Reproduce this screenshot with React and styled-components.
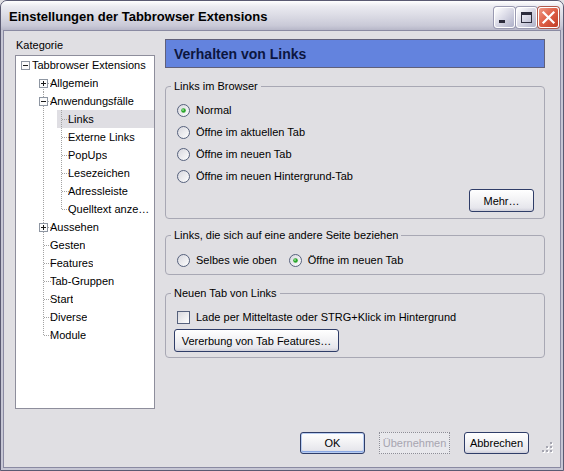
import React from 'react';
import styled, { createGlobalStyle } from 'styled-components';

const GlobalStyle = createGlobalStyle`
  html, body {
    margin: 0;
    padding: 0;
    background: #e0dfe3;
  }
  body {
    font-family: "Liberation Sans", Arial, sans-serif;
    font-size: 11px;
    color: #000;
  }
  * {
    box-sizing: border-box;
  }
`;

const tree = [
  { label: 'Tabbrowser Extensions', guides: [{ exp: '-' }] },
  { label: 'Allgemein', guides: [null, { kind: 'first', exp: '+' }] },
  { label: 'Anwendungsfälle', guides: [null, { kind: 'mid', exp: '-' }] },
  { label: 'Links', selected: true, guides: [null, { kind: 'pass' }, { kind: 'mid' }] },
  { label: 'Externe Links', guides: [null, { kind: 'pass' }, { kind: 'mid' }] },
  { label: 'PopUps', guides: [null, { kind: 'pass' }, { kind: 'mid' }] },
  { label: 'Lesezeichen', guides: [null, { kind: 'pass' }, { kind: 'mid' }] },
  { label: 'Adressleiste', guides: [null, { kind: 'pass' }, { kind: 'mid' }] },
  { label: 'Quelltext anze…', guides: [null, { kind: 'pass' }, { kind: 'last' }] },
  { label: 'Aussehen', guides: [null, { kind: 'mid', exp: '+' }] },
  { label: 'Gesten', guides: [null, { kind: 'mid' }] },
  { label: 'Features', guides: [null, { kind: 'mid' }] },
  { label: 'Tab-Gruppen', guides: [null, { kind: 'mid' }] },
  { label: 'Start', guides: [null, { kind: 'mid' }] },
  { label: 'Diverse', guides: [null, { kind: 'mid' }] },
  { label: 'Module', guides: [null, { kind: 'last' }] },
];

const browserOptions = [
  { label: 'Normal', checked: true },
  { label: 'Öffne im aktuellen Tab' },
  { label: 'Öffne im neuen Tab' },
  { label: 'Öffne im neuen Hintergrund-Tab' },
];

// tree guide lines + expander box
const Guide = ({ kind, exp }) => {
  const dot = { stroke: '#a3a3a3', strokeDasharray: '1 1' };
  return (
    <svg width="18" height="18" viewBox="0 0 18 18" shapeRendering="crispEdges">
      {(kind === 'pass' || kind === 'mid') && <line x1="9.5" y1="0" x2="9.5" y2="18" {...dot} />}
      {kind === 'last' && <line x1="9.5" y1="0" x2="9.5" y2="10" {...dot} />}
      {kind === 'first' && <line x1="9.5" y1="9" x2="9.5" y2="18" {...dot} />}
      {kind && kind !== 'pass' && <line x1="10" y1="9.5" x2="18" y2="9.5" {...dot} />}
      {exp && (
        <g>
          <rect x="5.5" y="5.5" width="8" height="8" fill="#fbfbfb" stroke="#8e96a2" />
          <line x1="7" y1="9.5" x2="12" y2="9.5" stroke="#1a1a1a" />
          {exp === '+' && <line x1="9.5" y1="7" x2="9.5" y2="12" stroke="#1a1a1a" />}
        </g>
      )}
    </svg>
  );
};

const RadioIcon = ({ checked }) => (
  <svg width="13" height="13" viewBox="0 0 13 13">
    <defs>
      <linearGradient id="radioFill" x1="0" y1="0" x2="1" y2="1">
        <stop offset="0" stopColor="#d6d6dd" />
        <stop offset="1" stopColor="#ffffff" />
      </linearGradient>
    </defs>
    <circle cx="6.5" cy="6.5" r="6" fill="url(#radioFill)" stroke="#56617c" />
    {checked && <circle cx="6.5" cy="6.5" r="2.3" fill="#2aa52a" />}
    {checked && <circle cx="6" cy="6" r="0.9" fill="#8ee08e" />}
  </svg>
);

const MinimizeIcon = () => (
  <svg width="21" height="21" viewBox="0 0 21 21" shapeRendering="crispEdges">
    <rect x="5" y="13" width="6" height="3" fill="#2c2c3c" />
  </svg>
);

const MaximizeIcon = () => (
  <svg width="21" height="21" viewBox="0 0 21 21" shapeRendering="crispEdges">
    <rect x="5.5" y="5.5" width="10" height="10" fill="none" stroke="#2c2c3c" />
    <rect x="5" y="5" width="11" height="3" fill="#2c2c3c" />
  </svg>
);

const CloseIcon = () => (
  <svg width="21" height="21" viewBox="0 0 21 21">
    <path d="M5.5 5.5 L15.5 15.5 M15.5 5.5 L5.5 15.5" stroke="#fff" strokeWidth="2.2" strokeLinecap="square" />
  </svg>
);

const GripIcon = () => (
  <svg width="12" height="12" viewBox="0 0 12 12" shapeRendering="crispEdges">
    {[[8, 0], [4, 4], [8, 4], [0, 8], [4, 8], [8, 8]].map(([x, y]) => (
      <g key={`${x}-${y}`}>
        <rect x={x + 1} y={y + 1} width="2" height="2" fill="#ffffff" />
        <rect x={x} y={y} width="2" height="2" fill="#a5a5b0" />
      </g>
    ))}
  </svg>
);

const App = () => (
  <>
    <GlobalStyle />
    <Window>
      <TitleBar>
        <Title>Einstellungen der Tabbrowser Extensions</Title>
        <CaptionButtons>
          <CaptionButton><MinimizeIcon /></CaptionButton>
          <CaptionButton><MaximizeIcon /></CaptionButton>
          <CaptionButton $close><CloseIcon /></CaptionButton>
        </CaptionButtons>
      </TitleBar>

      <Client>
        <Body>
          <Sidebar>
            <SideLabel>Kategorie</SideLabel>
            <Tree>
              {tree.map(item => (
                <TreeRow key={item.label} $selected={item.selected}>
                  {item.guides.map((g, i) => (
                    <Guide key={i} kind={g && g.kind} exp={g && g.exp} />
                  ))}
                  <TreeLabel>{item.label}</TreeLabel>
                </TreeRow>
              ))}
            </Tree>
          </Sidebar>

          <Main>
            <Header>Verhalten von Links</Header>

            <Group $top={12} $pad="6px 11px 6px">
              <Legend>Links im Browser</Legend>
              {browserOptions.map(opt => (
                <Option key={opt.label} $h={22}>
                  <RadioIcon checked={opt.checked} />
                  <span>{opt.label}</span>
                </Option>
              ))}
              <ButtonRow>
                <PushButton $w={65}>Mehr…</PushButton>
              </ButtonRow>
            </Group>

            <Group $top={10} $pad="9px 11px 5px">
              <Legend>Links, die sich auf eine andere Seite beziehen</Legend>
              <InlineOptions>
                <Option $h={18}>
                  <RadioIcon />
                  <span>Selbes wie oben</span>
                </Option>
                <Option $h={18}>
                  <RadioIcon checked />
                  <span>Öffne im neuen Tab</span>
                </Option>
              </InlineOptions>
            </Group>

            <Group $top={12} $pad="8px 11px 5px">
              <Legend>Neuen Tab von Links</Legend>
              <Option $h={18}>
                <CheckBox />
                <span>Lade per Mitteltaste oder STRG+Klick im Hintergrund</span>
              </Option>
              <FeatureButton $w={165}>Vererbung von Tab Features…</FeatureButton>
            </Group>
          </Main>
        </Body>

        <Footer>
          <PushButton $w={65} $default>OK</PushButton>
          <PushButton $w={71} disabled>Übernehmen</PushButton>
          <PushButton $w={65}>Abbrechen</PushButton>
        </Footer>
        <Grip><GripIcon /></Grip>
      </Client>
    </Window>
  </>
);

export default App;

const Window = styled.div`
  width: 564px;
  height: 471px;
  display: flex;
  flex-direction: column;
  border: 1px solid #5a5a72;
  border-radius: 7px 7px 0 0;
  background: #c6c6d4;
  overflow: hidden;
`;

const TitleBar = styled.div`
  height: 29px;
  flex-shrink: 0;
  display: flex;
  align-items: center;
  justify-content: space-between;
  padding: 0 4px 0 8px;
  background: linear-gradient(#ffffff 0%, #ebebf1 18%, #d9d9e3 55%, #c9c9d7 85%, #b7b7c8 100%);
`;

const Title = styled.div`
  font-family: "Liberation Sans", Arial, sans-serif;
  font-weight: bold;
  font-size: 13px;
  color: #000;
  padding-top: 1px;
`;

const CaptionButtons = styled.div`
  display: flex;
  gap: 1px;
  padding-top: 3px;
`;

const CaptionButton = styled.div`
  width: 21px;
  height: 21px;
  border: 1px solid #fff;
  border-radius: 3px;
  display: flex;
  align-items: center;
  justify-content: center;
  overflow: hidden;
  background: ${p => p.$close
    ? 'linear-gradient(135deg, #ef9a86 0%, #e0634a 45%, #c13b22 100%)'
    : 'linear-gradient(135deg, #ffffff 0%, #dcdce8 45%, #aeb0c8 100%)'};
  box-shadow: 0 0 0 1px ${p => (p.$close ? '#b05a4c' : '#9a9ab2')};
  svg {
    margin: -1px;
  }
`;

const Client = styled.div`
  position: relative;
  flex: 1;
  min-height: 0;
  margin: 0 2px 2px;
  border: 1px solid #8a8aa2;
  background: #e0dfe3;
  display: flex;
  flex-direction: column;
  padding: 8px 15px 13px 11px;
`;

const Body = styled.div`
  flex: 1;
  min-height: 0;
  display: flex;
  gap: 10px;
`;

const Sidebar = styled.div`
  width: 140px;
  flex-shrink: 0;
  display: flex;
  flex-direction: column;
`;

const SideLabel = styled.div`
  line-height: 13px;
  padding-left: 1px;
`;

const Tree = styled.div`
  flex: 1;
  margin-top: 3px;
  background: #fff;
  border: 1px solid #8e8e9c;
  overflow: hidden;
`;

const TreeRow = styled.div`
  height: 18px;
  display: flex;
  align-items: center;
  background: ${p => (p.$selected
    ? 'linear-gradient(90deg, transparent 41px, #dfdee3 41px)'
    : 'transparent')};

  svg {
    flex-shrink: 0;
  }
`;

const TreeLabel = styled.span`
  margin-left: -2px;
  white-space: nowrap;
  overflow: hidden;
`;

const Main = styled.div`
  flex: 1;
  min-width: 0;
  display: flex;
  flex-direction: column;
`;

const Header = styled.div`
  height: 29px;
  display: flex;
  align-items: center;
  padding-left: 8px;
  background: #6383de;
  border: 1px solid #60607a;
  font-weight: bold;
  font-size: 14px;
  color: #0c1640;
`;

const Group = styled.fieldset`
  margin: ${p => p.$top}px 0 0;
  padding: ${p => p.$pad};
  border: 1px solid #a8a8b4;
  border-radius: 4px;
  min-width: 0;
`;

const Legend = styled.legend`
  padding: 0 3px;
  margin-left: -6px;
  line-height: 13px;
  color: #000;
`;

const Option = styled.div`
  height: ${p => p.$h}px;
  display: flex;
  align-items: center;
  gap: 6px;
  white-space: nowrap;
`;

const InlineOptions = styled.div`
  display: flex;
  gap: 12px;
`;

const CheckBox = styled.span`
  width: 13px;
  height: 13px;
  flex-shrink: 0;
  border: 1px solid #56617c;
  background: linear-gradient(135deg, #d8d8de, #ffffff);
`;

const ButtonRow = styled.div`
  display: flex;
  justify-content: flex-end;
  margin: 2px -1px 0 0;
`;

const PushButton = styled.button`
  width: ${p => p.$w}px;
  height: 23px;
  padding: 0;
  font-family: "Liberation Sans", Arial, sans-serif;
  font-size: 11px;
  color: #000;
  border: 1px solid #2f3d68;
  border-radius: 3px;
  background: linear-gradient(#ffffff 0%, #f4f4f6 40%, #e6e6ec 85%, #cfcfda 100%);
  box-shadow: ${p => (p.$default
    ? 'inset 0 0 0 1px #b8cdf2, inset 0 -1px 0 1px #8aa8e4'
    : 'none')};

  &:disabled {
    color: #a7a5b0;
    background: #e8e8ec;
    border: 1px dotted #8d8d96;
    border-radius: 0;
  }
`;

const FeatureButton = styled(PushButton)`
  display: block;
  margin: 3px 0 0 -3px;
`;

const Footer = styled.div`
  flex-shrink: 0;
  margin-top: 23px;
  height: 22px;
  display: flex;
  justify-content: flex-end;
  gap: 14px;
  padding-right: 16px;

  & > button {
    height: 22px;
  }
`;

const Grip = styled.div`
  position: absolute;
  right: 6px;
  bottom: 13px;
  width: 12px;
  height: 12px;
  line-height: 0;
`;
